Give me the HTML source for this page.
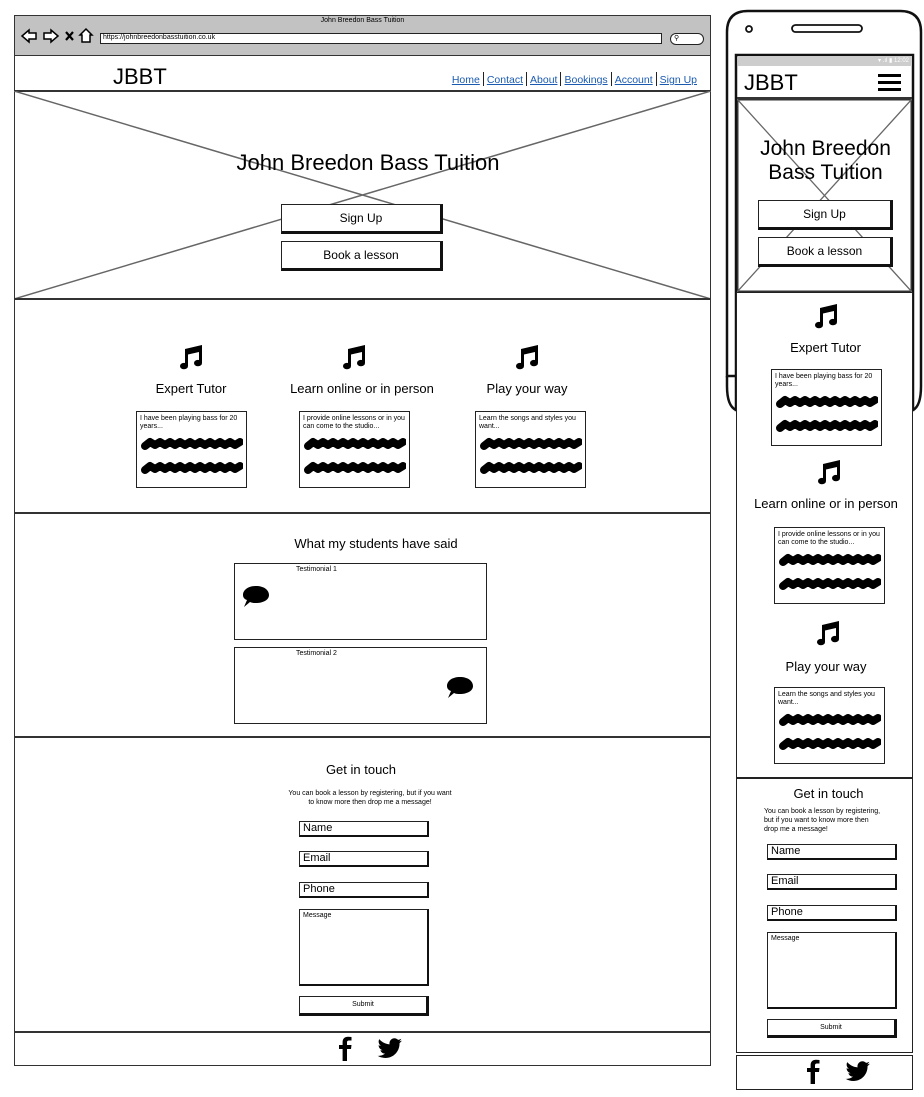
<!DOCTYPE html>
<html><head><meta charset="utf-8">
<style>
*{margin:0;padding:0;box-sizing:border-box}
body{width:924px;height:1097px;background:#fff;position:relative;overflow:hidden;font-family:"Liberation Sans",sans-serif;color:#000}
.a{position:absolute}
.box{position:absolute;border:1.5px solid #222;background:#fff}
.btn{position:absolute;border:1.5px solid #222;border-right:3px solid #111;border-bottom:3px solid #111;background:#fff;text-align:center;font-size:12px}
.c{position:absolute;text-align:center;white-space:nowrap}
.inp{position:absolute;border:1.5px solid #222;border-right:2px solid #111;border-bottom:2px solid #111;font-size:11px;padding-left:3px;line-height:13px;background:#fff}
.card{position:absolute;border:1.5px solid #222;background:#fff;font-size:7px;line-height:8px;padding:3px 3px}
.nav a{color:#1a5ab0;text-decoration:underline;font-size:10.5px}
.nav span{display:inline-block;width:1px;height:14px;background:#222;margin:0 3px;vertical-align:-3px}
</style></head><body>

<!-- Desktop browser -->
<div class="a" style="left:14px;top:15px;width:697px;height:1051px;border:1.5px solid #333"></div>
<div class="a" style="left:15px;top:16px;width:695px;height:40px;background:#c2c2c2;border-bottom:1.5px solid #333"></div>
<div class="c" style="left:14px;top:17px;width:697px;font-size:7px">John Breedon Bass Tuition</div>
<svg class="a" style="left:20px;top:27px" width="78" height="18" viewBox="0 0 78 18">
<path d="M2 9 L9 3 L9 6 L16 6 L16 12 L9 12 L9 15 Z" fill="#fff" stroke="#000" stroke-width="1.5"/>
<path d="M38 9 L31 3 L31 6 L24 6 L24 12 L31 12 L31 15 Z" fill="#fff" stroke="#000" stroke-width="1.5"/>
<path d="M46 5 L53 13 M53 5 L46 13" stroke="#000" stroke-width="2.2"/>
<path d="M66 2 L60 8 L62 8 L62 15 L70 15 L70 8 L72 8 Z" fill="#fff" stroke="#000" stroke-width="1.5"/>
</svg>
<div class="a" style="left:100px;top:33px;width:562px;height:11px;background:#fff;border:1.5px solid #222;font-size:7px;line-height:8px;padding-left:2px">https://johnbreedonbasstuition.co.uk</div>
<div class="a" style="left:670px;top:33px;width:34px;height:12px;background:#fff;border:1.5px solid #222;border-radius:7px;font-size:7px;line-height:9px;padding-left:3px">&#9906;</div>

<div class="a" style="left:113px;top:64px;font-size:22px">JBBT</div>
<div class="a nav" style="right:227px;top:70px;white-space:nowrap"><a>Home</a><span></span><a>Contact</a><span></span><a>About</a><span></span><a>Bookings</a><span></span><a>Account</a><span></span><a>Sign Up</a></div>

<div class="a" style="left:14px;top:90px;width:697px;height:1.5px;background:#333"></div>
<svg class="a" style="left:14px;top:91px" width="697" height="208"><path d="M0 0 L697 208 M697 0 L0 208" stroke="#666" stroke-width="1.5"/></svg>
<div class="c" style="left:14px;top:150px;width:708px;font-size:22px">John Breedon Bass Tuition</div>
<div class="btn" style="left:281px;top:204px;width:162px;height:30px;line-height:26px">Sign Up</div>
<div class="btn" style="left:281px;top:241px;width:162px;height:30px;line-height:26px">Book a lesson</div>
<div class="a" style="left:14px;top:298px;width:697px;height:1.5px;background:#333"></div>

<!-- features -->
<svg class="a" style="left:178px;top:344px" width="26" height="26" viewBox="0 0 26 26"><path d="M7 5 L24 1 L24 19 A4 3.2 0 1 1 21 16 L21 8 L10 10.5 L10 22 A4 3.2 0 1 1 7 19 Z" fill="#000"/></svg>
<svg class="a" style="left:341px;top:344px" width="26" height="26" viewBox="0 0 26 26"><path d="M7 5 L24 1 L24 19 A4 3.2 0 1 1 21 16 L21 8 L10 10.5 L10 22 A4 3.2 0 1 1 7 19 Z" fill="#000"/></svg>
<svg class="a" style="left:514px;top:344px" width="26" height="26" viewBox="0 0 26 26"><path d="M7 5 L24 1 L24 19 A4 3.2 0 1 1 21 16 L21 8 L10 10.5 L10 22 A4 3.2 0 1 1 7 19 Z" fill="#000"/></svg>
<div class="c" style="left:91px;top:381px;width:200px;font-size:13px">Expert Tutor</div>
<div class="c" style="left:262px;top:381px;width:200px;font-size:13px">Learn online or in person</div>
<div class="c" style="left:427px;top:381px;width:200px;font-size:13px">Play your way</div>

<div class="card" style="left:136px;top:411px;width:111px;height:77px">I have been playing bass for 20 years...
<svg style="position:absolute;left:3px;top:23px" width="103" height="46"><path d="M5 11 l5 -4 l5 3 l5 -3 l5 3 l5 -3 l5 3 l5 -3 l5 3 l5 -3 l5 3 l5 -3 l5 3 l5 -3 l5 3 l5 -3 l5 3 l5 -3 l5 3 l5 -3 M5 35 l5 -4 l5 3 l5 -3 l5 3 l5 -3 l5 3 l5 -3 l5 3 l5 -3 l5 3 l5 -3 l5 3 l5 -3 l5 3 l5 -3 l5 3 l5 -3 l5 3 l5 -3" stroke="#000" stroke-width="8" fill="none" stroke-linecap="round" stroke-linejoin="round"/></svg></div>
<div class="card" style="left:299px;top:411px;width:111px;height:77px">I provide online lessons or in you can come to the studio...
<svg style="position:absolute;left:3px;top:23px" width="103" height="46"><path d="M5 11 l5 -4 l5 3 l5 -3 l5 3 l5 -3 l5 3 l5 -3 l5 3 l5 -3 l5 3 l5 -3 l5 3 l5 -3 l5 3 l5 -3 l5 3 l5 -3 l5 3 l5 -3 M5 35 l5 -4 l5 3 l5 -3 l5 3 l5 -3 l5 3 l5 -3 l5 3 l5 -3 l5 3 l5 -3 l5 3 l5 -3 l5 3 l5 -3 l5 3 l5 -3 l5 3 l5 -3" stroke="#000" stroke-width="8" fill="none" stroke-linecap="round" stroke-linejoin="round"/></svg></div>
<div class="card" style="left:475px;top:411px;width:111px;height:77px">Learn the songs and styles you want...
<svg style="position:absolute;left:3px;top:23px" width="103" height="46"><path d="M5 11 l5 -4 l5 3 l5 -3 l5 3 l5 -3 l5 3 l5 -3 l5 3 l5 -3 l5 3 l5 -3 l5 3 l5 -3 l5 3 l5 -3 l5 3 l5 -3 l5 3 l5 -3 M5 35 l5 -4 l5 3 l5 -3 l5 3 l5 -3 l5 3 l5 -3 l5 3 l5 -3 l5 3 l5 -3 l5 3 l5 -3 l5 3 l5 -3 l5 3 l5 -3 l5 3 l5 -3" stroke="#000" stroke-width="8" fill="none" stroke-linecap="round" stroke-linejoin="round"/></svg></div>
<div class="a" style="left:14px;top:512px;width:697px;height:1.5px;background:#333"></div>

<!-- testimonials -->
<div class="c" style="left:14px;top:536px;width:724px;font-size:13px">What my students have said</div>
<div class="box" style="left:234px;top:563px;width:253px;height:77px"><div class="a" style="left:61px;top:2px;font-size:7px">Testimonial 1</div>
<svg class="a" style="left:6px;top:20px" width="30" height="26" viewBox="0 0 30 26"><path d="M15 2 C23 2 28 6 28 11 C28 16 22 19 15 19 C13 19 11 19 9 18 L3 23 L6 16 C3 15 2 13 2 11 C2 6 7 2 15 2 Z" fill="#000"/></svg></div>
<div class="box" style="left:234px;top:647px;width:253px;height:77px"><div class="a" style="left:61px;top:2px;font-size:7px">Testimonial 2</div>
<svg class="a" style="left:210px;top:27px" width="30" height="26" viewBox="0 0 30 26"><path d="M15 2 C23 2 28 6 28 11 C28 16 22 19 15 19 C13 19 11 19 9 18 L3 23 L6 16 C3 15 2 13 2 11 C2 6 7 2 15 2 Z" fill="#000"/></svg></div>
<div class="a" style="left:14px;top:736px;width:697px;height:1.5px;background:#333"></div>

<!-- contact -->
<div class="c" style="left:14px;top:762px;width:694px;font-size:13px">Get in touch</div>
<div class="c" style="left:285px;top:789px;width:170px;font-size:7px;line-height:9px;white-space:normal">You can book a lesson by registering, but if you want to know more then drop me a message!</div>
<div class="inp" style="left:299px;top:821px;width:130px;height:16px">Name</div>
<div class="inp" style="left:299px;top:851px;width:130px;height:16px">Email</div>
<div class="inp" style="left:299px;top:882px;width:130px;height:16px">Phone</div>
<div class="inp" style="left:299px;top:909px;width:130px;height:77px;font-size:7px;line-height:12px">Message</div>
<div class="btn" style="left:299px;top:996px;width:130px;height:20px;font-size:7px;line-height:16px">Submit</div>
<div class="a" style="left:14px;top:1031px;width:697px;height:1.5px;background:#333"></div>
<svg class="a" style="left:337px;top:1036px" width="16" height="26" viewBox="0 0 16 26"><path d="M10 25 L10 13 L14 13 L14.5 9 L10 9 L10 6.5 C10 5 10.6 4.5 12 4.5 L14.5 4.5 L14.5 1 C13.5 0.8 12.3 0.7 11 0.7 C7.8 0.7 5.6 2.6 5.6 6 L5.6 9 L2 9 L2 13 L5.6 13 L5.6 25 Z" fill="#000"/></svg>
<svg class="a" style="left:377px;top:1038px" width="26" height="22" viewBox="0 0 24 20"><path d="M23 2.3c-.8.4-1.7.6-2.6.7.9-.6 1.6-1.4 2-2.5-.9.5-1.9.9-2.9 1.1C18.6.7 17.4.1 16.1.1c-2.5 0-4.6 2.1-4.6 4.6 0 .4 0 .7.1 1C7.8 5.5 4.4 3.7 2.1.9c-.4.7-.6 1.5-.6 2.3 0 1.6.8 3 2.1 3.8-.8 0-1.5-.2-2.1-.6v.1c0 2.2 1.6 4.1 3.7 4.5-.4.1-.8.2-1.2.2-.3 0-.6 0-.9-.1.6 1.8 2.3 3.2 4.3 3.2-1.6 1.200-3.6 2-5.7 2-.4 0-.7 0-1.1-.1 2 1.3 4.5 2.1 7.1 2.1 8.5 0 13.1-7 13.1-13.1v-.6c.9-.7 1.7-1.5 2.3-2.4z" fill="#000"/></svg>

<!-- Phone -->
<svg class="a" style="left:724px;top:8px" width="200" height="410" viewBox="0 0 200 410">
<path d="M12 368 L3 368 L3 24 Q3 3 24 3 L176 3 Q197 3 197 24 L197 378 Q197 398 189 402" fill="none" stroke="#111" stroke-width="2.5"/>
<path d="M3 368 L3 378 Q3 398 12 402" fill="none" stroke="#111" stroke-width="2.5"/>
<circle cx="25" cy="21" r="3" fill="none" stroke="#111" stroke-width="1.8"/>
<rect x="68" y="17" width="70" height="7" rx="3.5" fill="none" stroke="#111" stroke-width="1.8"/>
<rect x="12" y="47" width="177" height="355" fill="#fff" stroke="#111" stroke-width="2.5"/>
</svg>
<div class="a" style="left:738px;top:56px;width:174px;height:10px;background:#cdcdcd;color:#fff;font-size:6px;text-align:right;padding-right:3px;line-height:10px">&#9662; .ıl ▮ 12:02</div>
<div class="a" style="left:744px;top:70px;font-size:22px">JBBT</div>
<div class="a" style="left:878px;top:74px;width:23px;height:3px;background:#000"></div>
<div class="a" style="left:878px;top:81px;width:23px;height:3px;background:#000"></div>
<div class="a" style="left:878px;top:88px;width:23px;height:3px;background:#000"></div>
<div class="a" style="left:737px;top:97px;width:175px;height:1.5px;background:#333"></div>
<svg class="a" style="left:737px;top:99px" width="175" height="193"><rect x="0.75" y="0.75" width="173.5" height="191.5" fill="none" stroke="#333" stroke-width="1.5"/><path d="M0 0 L175 193 M175 0 L0 193" stroke="#666" stroke-width="1.3"/></svg>
<div class="c" style="left:737px;top:137px;width:177px;font-size:21px;line-height:24px">John Breedon<br>Bass Tuition</div>
<div class="btn" style="left:758px;top:200px;width:135px;height:30px;line-height:26px">Sign Up</div>
<div class="btn" style="left:758px;top:237px;width:135px;height:30px;line-height:26px">Book a lesson</div>

<div class="box" style="left:736px;top:292px;width:177px;height:486px"></div>
<svg class="a" style="left:813px;top:303px" width="26" height="26" viewBox="0 0 26 26"><path d="M7 5 L24 1 L24 19 A4 3.2 0 1 1 21 16 L21 8 L10 10.5 L10 22 A4 3.2 0 1 1 7 19 Z" fill="#000"/></svg>
<div class="c" style="left:736px;top:340px;width:179px;font-size:13px">Expert Tutor</div>
<div class="card" style="left:771px;top:369px;width:111px;height:77px">I have been playing bass for 20 years...
<svg style="position:absolute;left:3px;top:23px" width="103" height="46"><path d="M5 11 l5 -4 l5 3 l5 -3 l5 3 l5 -3 l5 3 l5 -3 l5 3 l5 -3 l5 3 l5 -3 l5 3 l5 -3 l5 3 l5 -3 l5 3 l5 -3 l5 3 l5 -3 M5 35 l5 -4 l5 3 l5 -3 l5 3 l5 -3 l5 3 l5 -3 l5 3 l5 -3 l5 3 l5 -3 l5 3 l5 -3 l5 3 l5 -3 l5 3 l5 -3 l5 3 l5 -3" stroke="#000" stroke-width="8" fill="none" stroke-linecap="round" stroke-linejoin="round"/></svg></div>
<svg class="a" style="left:816px;top:459px" width="26" height="26" viewBox="0 0 26 26"><path d="M7 5 L24 1 L24 19 A4 3.2 0 1 1 21 16 L21 8 L10 10.5 L10 22 A4 3.2 0 1 1 7 19 Z" fill="#000"/></svg>
<div class="c" style="left:736px;top:496px;width:180px;font-size:13px">Learn online or in person</div>
<div class="card" style="left:774px;top:527px;width:111px;height:77px">I provide online lessons or in you can come to the studio...
<svg style="position:absolute;left:3px;top:23px" width="103" height="46"><path d="M5 11 l5 -4 l5 3 l5 -3 l5 3 l5 -3 l5 3 l5 -3 l5 3 l5 -3 l5 3 l5 -3 l5 3 l5 -3 l5 3 l5 -3 l5 3 l5 -3 l5 3 l5 -3 M5 35 l5 -4 l5 3 l5 -3 l5 3 l5 -3 l5 3 l5 -3 l5 3 l5 -3 l5 3 l5 -3 l5 3 l5 -3 l5 3 l5 -3 l5 3 l5 -3 l5 3 l5 -3" stroke="#000" stroke-width="8" fill="none" stroke-linecap="round" stroke-linejoin="round"/></svg></div>
<svg class="a" style="left:815px;top:620px" width="26" height="26" viewBox="0 0 26 26"><path d="M7 5 L24 1 L24 19 A4 3.2 0 1 1 21 16 L21 8 L10 10.5 L10 22 A4 3.2 0 1 1 7 19 Z" fill="#000"/></svg>
<div class="c" style="left:736px;top:659px;width:180px;font-size:13px">Play your way</div>
<div class="card" style="left:774px;top:687px;width:111px;height:77px">Learn the songs and styles you want...
<svg style="position:absolute;left:3px;top:23px" width="103" height="46"><path d="M5 11 l5 -4 l5 3 l5 -3 l5 3 l5 -3 l5 3 l5 -3 l5 3 l5 -3 l5 3 l5 -3 l5 3 l5 -3 l5 3 l5 -3 l5 3 l5 -3 l5 3 l5 -3 M5 35 l5 -4 l5 3 l5 -3 l5 3 l5 -3 l5 3 l5 -3 l5 3 l5 -3 l5 3 l5 -3 l5 3 l5 -3 l5 3 l5 -3 l5 3 l5 -3 l5 3 l5 -3" stroke="#000" stroke-width="8" fill="none" stroke-linecap="round" stroke-linejoin="round"/></svg></div>

<div class="box" style="left:736px;top:778px;width:177px;height:275px"></div>
<div class="c" style="left:740px;top:786px;width:177px;font-size:13px">Get in touch</div>
<div class="a" style="left:764px;top:807px;width:118px;font-size:7px;line-height:9px">You can book a lesson by registering, but if you want to know more then drop me a message!</div>
<div class="inp" style="left:767px;top:844px;width:130px;height:16px">Name</div>
<div class="inp" style="left:767px;top:874px;width:130px;height:16px">Email</div>
<div class="inp" style="left:767px;top:905px;width:130px;height:16px">Phone</div>
<div class="inp" style="left:767px;top:932px;width:130px;height:77px;font-size:7px;line-height:12px">Message</div>
<div class="btn" style="left:767px;top:1019px;width:130px;height:19px;font-size:7px;line-height:15px">Submit</div>
<div class="box" style="left:736px;top:1055px;width:177px;height:35px"></div>
<svg class="a" style="left:805px;top:1059px" width="16" height="26" viewBox="0 0 16 26"><path d="M10 25 L10 13 L14 13 L14.5 9 L10 9 L10 6.5 C10 5 10.6 4.5 12 4.5 L14.5 4.5 L14.5 1 C13.5 0.8 12.3 0.7 11 0.7 C7.8 0.7 5.6 2.6 5.6 6 L5.6 9 L2 9 L2 13 L5.6 13 L5.6 25 Z" fill="#000"/></svg>
<svg class="a" style="left:845px;top:1061px" width="26" height="22" viewBox="0 0 24 20"><path d="M23 2.3c-.8.4-1.7.6-2.6.7.9-.6 1.6-1.4 2-2.5-.9.5-1.9.9-2.9 1.1C18.6.7 17.4.1 16.1.1c-2.5 0-4.6 2.1-4.6 4.6 0 .4 0 .7.1 1C7.8 5.5 4.4 3.7 2.1.9c-.4.7-.6 1.5-.6 2.3 0 1.6.8 3 2.1 3.8-.8 0-1.5-.2-2.1-.6v.1c0 2.2 1.6 4.1 3.7 4.5-.4.1-.8.2-1.2.2-.3 0-.6 0-.9-.1.6 1.8 2.3 3.2 4.3 3.2-1.6 1.2-3.6 2-5.7 2-.4 0-.7 0-1.1-.1 2 1.3 4.5 2.1 7.1 2.1 8.5 0 13.1-7 13.1-13.1v-.6c.9-.7 1.7-1.5 2.3-2.4z" fill="#000"/></svg>
</body></html>
